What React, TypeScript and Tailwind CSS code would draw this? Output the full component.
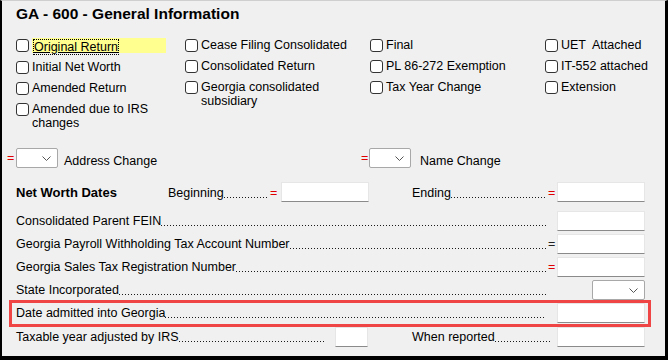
import React from "react";

function Box() {
  return <span className="mt-[1px] h-[13px] w-[13px] shrink-0 rounded-[3px] border border-[#333] bg-white" />;
}

function Cb({ label, w, first }: { label: string; w?: number; first?: boolean }) {
  return (
    <div className="flex items-start gap-[3px]">
      <Box />
      {first ? (
        <div className="h-[15px] w-[134px] bg-[#ffff8f] pl-[1px]">
          <span className="border border-dotted border-black leading-[13px] underline">{label}</span>
        </div>
      ) : (
        <span className={"leading-[14px] " + (w ? "" : "whitespace-pre")} style={w ? { width: w } : undefined}>
          {label}
        </span>
      )}
    </div>
  );
}

function Chevron() {
  return (
    <svg width="9" height="5" viewBox="0 0 9 5" className="absolute right-[6px] top-[7px]">
      <polyline points="0.5,0.5 4.5,4.5 8.5,0.5" fill="none" stroke="#555" strokeWidth="1" />
    </svg>
  );
}

function Sel({ w }: { w: number }) {
  return (
    <div className="relative h-[20px] shrink-0 rounded-[2px] border border-[#a8a8a8] bg-white" style={{ width: w }}>
      <Chevron />
    </div>
  );
}

function Inp({ w = 88 }: { w?: number }) {
  return (
    <div
      className="h-[20px] shrink-0 border border-[#e6e6e6] border-b-[#8a8a8a] bg-white"
      style={{ width: w }}
    />
  );
}

function Leader({
  label,
  eq,
  tail = 11,
  className = "",
}: {
  label: React.ReactNode;
  eq?: "red" | "dark";
  tail?: number;
  className?: string;
}) {
  return (
    <div className={"mt-[2px] flex min-w-0 leading-[15px] " + className}>
      <span className="shrink-0 whitespace-nowrap">{label}</span>
      <span className="relative min-w-0 flex-1">
        <span className="absolute inset-x-0 bottom-[3px] h-px bg-[repeating-linear-gradient(to_right,#1a1a1a_0_1px,transparent_1px_3px)]" />
      </span>
      <span
        className={"shrink-0 pl-[2px] " + (eq === "red" ? "text-[#e00000]" : "text-[#222]")}
        style={{ width: tail }}
      >
        {eq ? "=" : ""}
      </span>
    </div>
  );
}

function Row({ label, eq, select, children }: { label: string; eq?: "red" | "dark"; select?: boolean; children?: React.ReactNode }) {
  return (
    <div className="relative flex h-[23px] items-center">
      <Leader label={label} eq={eq} className="flex-1" />
      {select ? (
        <div className="flex w-[88px] justify-end">
          <Sel w={53} />
        </div>
      ) : (
        <Inp />
      )}
      {children}
    </div>
  );
}

export default function App() {
  return (
    <div
      className="h-[360px] w-[668px] overflow-hidden border-b-4 border-l-2 border-r-[3px] border-t border-b-black border-l-black border-r-black border-t-[#cfcfcf] bg-[#f0f0f0] pl-[14px] pr-[20px] pt-[3px] text-[12.5px] text-black"
      style={{ fontFamily: '"Liberation Sans", Arial, sans-serif' }}
    >
      <div className="text-[15.5px] font-bold leading-[20px]">GA - 600 - General Information</div>

      <div className="mt-[14px] flex">
        <div className="flex w-[169px] shrink-0 flex-col gap-[7px]">
          <Cb label="Original Return" first />
          <Cb label="Initial Net Worth" />
          <Cb label="Amended Return" />
          <Cb label="Amended due to IRS changes" w={125} />
        </div>
        <div className="flex w-[185px] shrink-0 flex-col gap-[7px]">
          <Cb label="Cease Filing Consolidated" w={165} />
          <Cb label="Consolidated Return" />
          <Cb label="Georgia consolidated subsidiary" w={150} />
        </div>
        <div className="flex w-[175px] shrink-0 flex-col gap-[7px]">
          <Cb label="Final" />
          <Cb label="PL 86-272 Exemption" />
          <Cb label="Tax Year Change" />
        </div>
        <div className="flex min-w-0 flex-1 flex-col gap-[7px]">
          <Cb label="UET  Attached" />
          <Cb label="IT-552 attached" />
          <Cb label="Extension" />
        </div>
      </div>

      <div className="mt-[18px] flex h-[20px] items-center">
        <div className="-ml-[9px] flex w-[354px] items-center">
          <span className="w-[9px] text-[#e00000]">=</span>
          <Sel w={42} />
          <span className="ml-[6px] pt-[6px]">Address Change</span>
        </div>
        <div className="flex items-center">
          <span className="w-[8px] text-[#e00000]">=</span>
          <Sel w={42} />
          <span className="ml-[9px] pt-[6px]">Name Change</span>
        </div>
      </div>

      <div className="mt-[14px] flex h-[20px] items-center">
        <span className="w-[152px] shrink-0 pt-[2px] text-[13px] font-bold">Net Worth Dates</span>
        <Leader label="Beginning" eq="red" tail={13} className="w-[113px] shrink-0" />
        <Inp />
        <Leader label="Ending" eq="red" className="ml-[43px] flex-1" />
        <Inp />
      </div>

      <div className="mt-[7px]">
        <Row label="Consolidated Parent FEIN" />
        <Row label="Georgia Payroll Withholding Tax Account Number" eq="dark" />
        <Row label="Georgia Sales Tax Registration Number" eq="red" />
        <Row label="State Incorporated" select />
        <Row label="Date admitted into Georgia">
          <div className="pointer-events-none absolute -left-[7px] -right-[6px] -top-[1px] bottom-[-3px] border-[3px] border-[#f04545]" />
        </Row>
        <div className="mt-[1px] flex h-[23px] items-center">
          <Leader label="Taxable year adjusted by IRS" tail={10} className="w-[319px] shrink-0" />
          <Inp w={33} />
          <Leader label="When reported" tail={7} className="ml-[44px] flex-1" />
          <Inp />
        </div>
      </div>
    </div>
  );
}
